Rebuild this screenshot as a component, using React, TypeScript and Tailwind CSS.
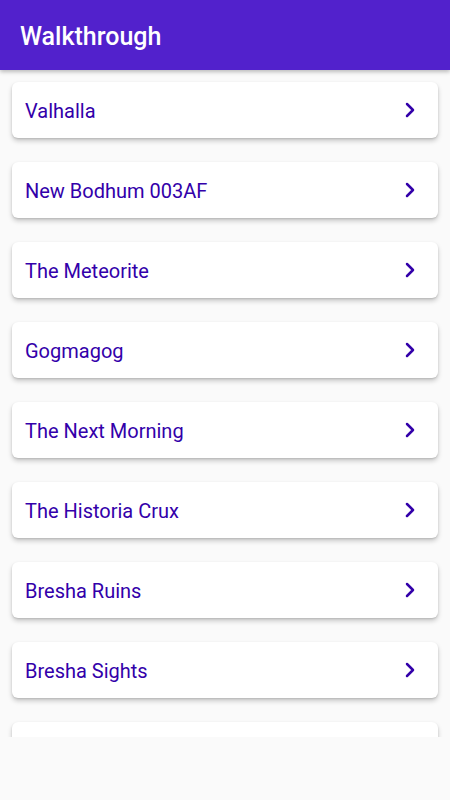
import { ChevronRight } from "lucide-react";

const chapters = [
  "Valhalla",
  "New Bodhum 003AF",
  "The Meteorite",
  "Gogmagog",
  "The Next Morning",
  "The Historia Crux",
  "Bresha Ruins",
  "Bresha Sights",
];

export default function App() {
  return (
    <div className="flex h-[800px] w-full flex-col bg-[#fafafa] font-['Roboto',sans-serif]">
      {/* App bar */}
      <header className="relative z-10 flex h-[70px] shrink-0 items-center bg-[#5221cc] px-5 pt-[3px] shadow-[0_2px_4px_rgba(0,0,0,0.25)]">
        <h1 className="text-[25px] font-medium text-white">Walkthrough</h1>
      </header>

      {/* Chapter list, clipped where the scroll area ends */}
      <div className="h-[667px] shrink-0 overflow-hidden">
        <ul className="flex flex-col gap-6 px-3 pt-3">
          {chapters.map((name) => (
            <li
              key={name}
              className="flex h-14 shrink-0 items-center justify-between rounded-md bg-white pl-[13px] pr-4 shadow-[0_3px_5px_rgba(0,0,0,0.2),0_1px_2px_rgba(0,0,0,0.12)]"
            >
              <span className="pt-px text-[20px] text-[#3300aa]">{name}</span>
              <ChevronRight className="h-6 w-6 text-[#3300aa]" strokeWidth={2.5} />
            </li>
          ))}
          {/* next card, only its top edge shows */}
          <li className="h-14 shrink-0 rounded-md bg-white shadow-[0_3px_5px_rgba(0,0,0,0.2),0_1px_2px_rgba(0,0,0,0.12)]" />
        </ul>
      </div>
    </div>
  );
}
